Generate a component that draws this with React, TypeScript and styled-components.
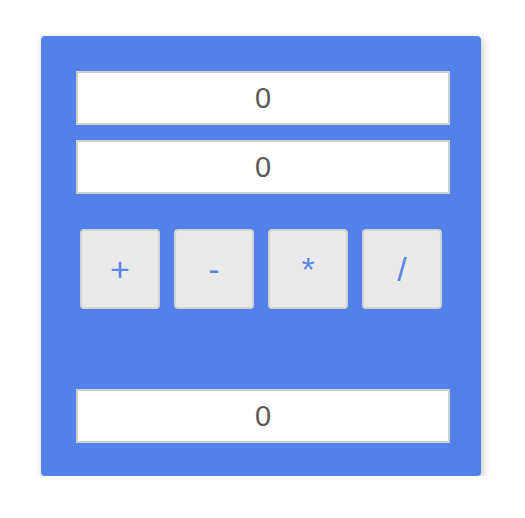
import React from "react";
import styled, { createGlobalStyle } from "styled-components";

const Global = createGlobalStyle`
  html, body { margin: 0; padding: 0; background: #ffffff; }
  body { font-family: "Liberation Sans", Arial, sans-serif; }
`;

const Page = styled.div`
  padding: 36px 0 0 41px;
`;

const Card = styled.div`
  width: 440px;
  height: 440px;
  box-sizing: border-box;
  background: #5181e9;
  border-radius: 4px;
  box-shadow: 2px 3px 8px rgba(0, 0, 0, 0.22);
  padding: 35px 0 0 35px;
  display: flex;
  flex-direction: column;
`;

const Field = styled.div<{ $mt?: number }>`
  width: 374px;
  height: 54px;
  box-sizing: border-box;
  margin-top: ${(p) => p.$mt ?? 0}px;
  background: #ffffff;
  border: 2px solid #cfcfcf;
  display: flex;
  align-items: center;
  justify-content: center;
  color: #5a5a5a;
  font-size: 29px;
`;

const Buttons = styled.div`
  margin-top: 35px;
  margin-left: 4px;
  display: flex;
  gap: 14px;
`;

const OpButton = styled.button`
  width: 80px;
  height: 80px;
  box-sizing: border-box;
  background: #eaeaea;
  border: 2px solid #d2d2d2;
  border-radius: 4px;
  color: #5a86ec;
  font-family: "Liberation Sans", Arial, sans-serif;
  font-size: 34px;
  padding: 0;
  display: flex;
  align-items: center;
  justify-content: center;
`;

export default function App() {
  return (
    <>
      <Global />
      <Page>
        <Card>
          <Field>0</Field>
          <Field $mt={15}>0</Field>
          <Buttons>
            <OpButton>+</OpButton>
            <OpButton>-</OpButton>
            <OpButton>*</OpButton>
            <OpButton>/</OpButton>
          </Buttons>
          <Field $mt={80}>0</Field>
        </Card>
      </Page>
    </>
  );
}
